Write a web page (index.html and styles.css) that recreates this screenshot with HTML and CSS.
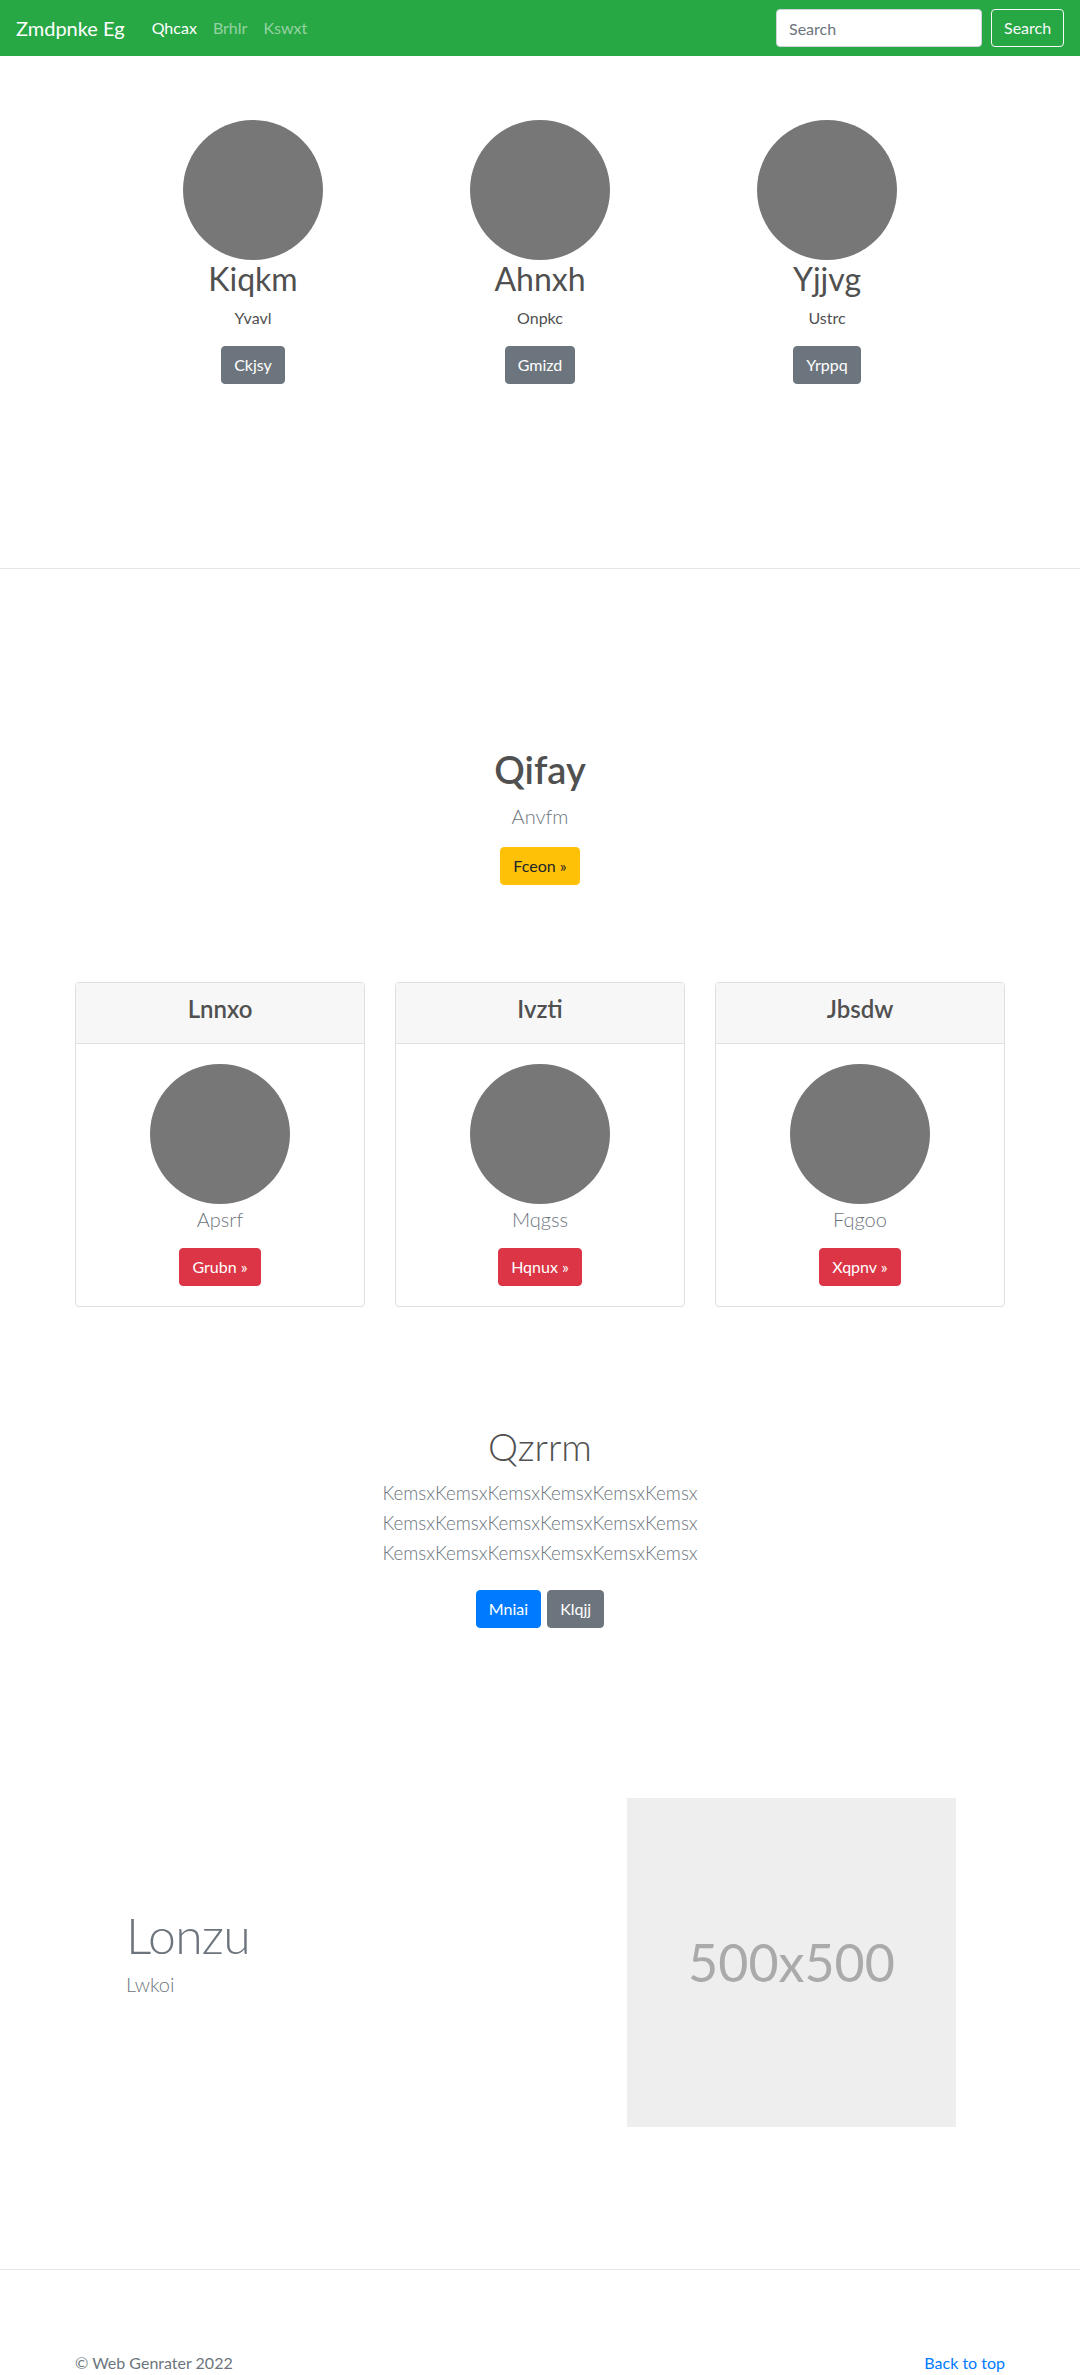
FILE: index.html
```html
<!DOCTYPE html>
<html lang="en">
<head>
<meta charset="utf-8">
<title>Zmdpnke Eg</title>
<link rel="stylesheet" href="styles.css">
</head>
<body>
<nav class="navbar">
  <a class="brand" href="#">Zmdpnke Eg</a>
  <ul class="nav">
    <li><a class="nav-link active" href="#">Qhcax</a></li>
    <li><a class="nav-link" href="#">Brhlr</a></li>
    <li><a class="nav-link" href="#">Kswxt</a></li>
  </ul>
  <form class="search">
    <input class="search-input" type="text" placeholder="Search">
    <button class="btn btn-outline-light" type="button">Search</button>
  </form>
</nav>

<section class="marketing">
  <div class="marketing-col">
    <div class="avatar"></div>
    <h2 class="marketing-title">Kiqkm</h2>
    <p class="marketing-text">Yvavl</p>
    <a class="btn btn-secondary" href="#">Ckjsy</a>
  </div>
  <div class="marketing-col">
    <div class="avatar"></div>
    <h2 class="marketing-title">Ahnxh</h2>
    <p class="marketing-text">Onpkc</p>
    <a class="btn btn-secondary" href="#">Gmizd</a>
  </div>
  <div class="marketing-col">
    <div class="avatar"></div>
    <h2 class="marketing-title">Yjjvg</h2>
    <p class="marketing-text">Ustrc</p>
    <a class="btn btn-secondary" href="#">Yrppq</a>
  </div>
</section>

<div class="divider"></div>

<section class="hero">
  <h1 class="hero-title">Qifay</h1>
  <p class="lead muted hero-lead">Anvfm</p>
  <a class="btn btn-warning" href="#">Fceon »</a>
</section>

<section class="cards">
  <div class="card">
    <div class="card-header"><h4 class="card-title">Lnnxo</h4></div>
    <div class="card-body">
      <div class="avatar"></div>
      <p class="lead muted card-lead">Apsrf</p>
      <a class="btn btn-danger" href="#">Grubn »</a>
    </div>
  </div>
  <div class="card">
    <div class="card-header"><h4 class="card-title">Ivzti</h4></div>
    <div class="card-body">
      <div class="avatar"></div>
      <p class="lead muted card-lead">Mqgss</p>
      <a class="btn btn-danger" href="#">Hqnux »</a>
    </div>
  </div>
  <div class="card">
    <div class="card-header"><h4 class="card-title">Jbsdw</h4></div>
    <div class="card-body">
      <div class="avatar"></div>
      <p class="lead muted card-lead">Fqgoo</p>
      <a class="btn btn-danger" href="#">Xqpnv »</a>
    </div>
  </div>
</section>

<section class="album">
  <h1 class="album-title">Qzrrm</h1>
  <p class="lead muted album-lead">KemsxKemsxKemsxKemsxKemsxKemsx KemsxKemsxKemsxKemsxKemsxKemsx KemsxKemsxKemsxKemsxKemsxKemsx</p>
  <div class="album-actions">
    <a class="btn btn-primary" href="#">Mniai</a>
    <a class="btn btn-secondary" href="#">Klqjj</a>
  </div>
</section>

<section class="feature">
  <div class="feature-text">
    <h2 class="feature-title">Lonzu</h2>
    <p class="lead muted feature-lead">Lwkoi</p>
  </div>
  <div class="placeholder">500x500</div>
</section>

<div class="divider divider-footer"></div>

<footer class="footer">
  <p class="copyright">© Web Genrater 2022</p>
  <p class="back"><a href="#">Back to top</a></p>
</footer>
</body>
</html>
```

FILE: styles.css
```css
* { box-sizing: border-box; }

body {
  margin: 0;
  font-family: Lato, "Open Sans", "Liberation Sans", sans-serif;
  font-size: 16px;
  line-height: 1.5;
  color: #505050;
  background: #fff;
}

a { text-decoration: none; }

/* Navbar */
.navbar {
  height: 56px;
  background: #28a745;
  display: flex;
  align-items: center;
  padding: 0 16px;
}
.brand {
  color: #fff;
  font-size: 20px;
  line-height: 30px;
  margin-right: 19px;
}
.nav {
  display: flex;
  list-style: none;
  margin: 0;
  padding: 0;
  flex: 1;
}
.nav-link {
  display: block;
  padding: 8px;
  color: rgba(255, 255, 255, 0.5);
}
.nav-link.active { color: #fff; }

.search {
  display: flex;
  align-items: center;
  margin: 0;
}
.search-input {
  width: 206px;
  height: 38px;
  margin-right: 9px;
  padding: 6px 12px;
  font-family: inherit;
  font-size: 16px;
  color: #495057;
  border: 1px solid #ced4da;
  border-radius: 4px;
  background: #fff;
}
.search-input::placeholder { color: #6c757d; }

/* Buttons */
.btn {
  display: inline-block;
  padding: 6px 12px;
  font-family: inherit;
  font-size: 16px;
  line-height: 24px;
  border: 1px solid transparent;
  border-radius: 4px;
  text-align: center;
  color: #fff;
  background: none;
}
.btn-outline-light { border-color: #f8f9fa; color: #f8f9fa; width: 73px; }
.btn-secondary { background: #6c757d; border-color: #6c757d; }
.btn-warning { background: #ffc107; border-color: #ffc107; color: #212529; }
.btn-danger { background: #dc3545; border-color: #dc3545; }
.btn-primary { background: #007bff; border-color: #007bff; }

.lead { font-size: 20px; font-weight: 300; line-height: 30px; }
.muted { color: #6c757d; }

.avatar {
  width: 140px;
  height: 140px;
  border-radius: 50%;
  background: #777;
  margin: 0 auto;
}

/* Marketing */
.marketing {
  display: grid;
  grid-template-columns: repeat(3, 287px);
  justify-content: center;
  align-content: start;
  padding: 64px 0 0;
  height: 512px;
}
.marketing-col { text-align: center; }
.marketing-title {
  margin: 0 0 8px;
  font-size: 32px;
  font-weight: 400;
  line-height: 1.2;
}
.marketing-text { margin: 0 0 16px; }

.divider { height: 1px; background: #e5e5e5; }

/* Hero */
.hero {
  text-align: center;
  padding-top: 178px;
}
.hero-title {
  margin: 0 0 8px;
  font-size: 38px;
  font-weight: 600;
  line-height: 1.2;
}
.hero-lead { margin: 0 0 16px; }

/* Cards */
.cards {
  display: grid;
  grid-template-columns: repeat(3, 290px);
  column-gap: 30px;
  justify-content: center;
  margin-top: 97px;
}
.card {
  border: 1px solid #dfdfdf;
  border-radius: 4px;
  text-align: center;
  overflow: hidden;
}
.card-header {
  background: #f7f7f7;
  border-bottom: 1px solid #dfdfdf;
  padding: 12px 20px;
}
.card-title {
  margin: 0 0 8px;
  font-size: 24px;
  font-weight: 600;
  line-height: 1.2;
}
.card-body { padding: 20px; }
.card-lead { margin: 0 0 14px; }

/* Album */
.album {
  text-align: center;
  margin-top: 117px;
}
.album-title {
  margin: 0 0 8px;
  font-size: 38px;
  font-weight: 300;
  line-height: 1.2;
}
.album-lead {
  max-width: 610px;
  margin: 0 auto 22px;
  font-size: 18.7px;
}
.album-actions {
  display: flex;
  justify-content: center;
  gap: 6px;
}

/* Feature */
.feature {
  display: flex;
  align-items: center;
  justify-content: space-between;
  padding: 0 124px 0 126px;
  margin-top: 170px;
}
.feature-title {
  margin: 0 0 9px;
  font-size: 50px;
  font-weight: 300;
  line-height: 1;
  letter-spacing: -0.8px;
  color: #6c757d;
}
.feature-lead { margin: 0 0 16px; }
.placeholder {
  width: 329px;
  height: 329px;
  background: #eee;
  color: #aaa;
  font-size: 52px;
  display: flex;
  align-items: center;
  justify-content: center;
}

.divider-footer { margin-top: 142px; }

/* Footer */
.footer {
  display: flex;
  justify-content: space-between;
  padding: 81px 75px 0;
  color: #6c757d;
}
.footer p { margin: 0; }
.back a { color: #007bff; }
```
